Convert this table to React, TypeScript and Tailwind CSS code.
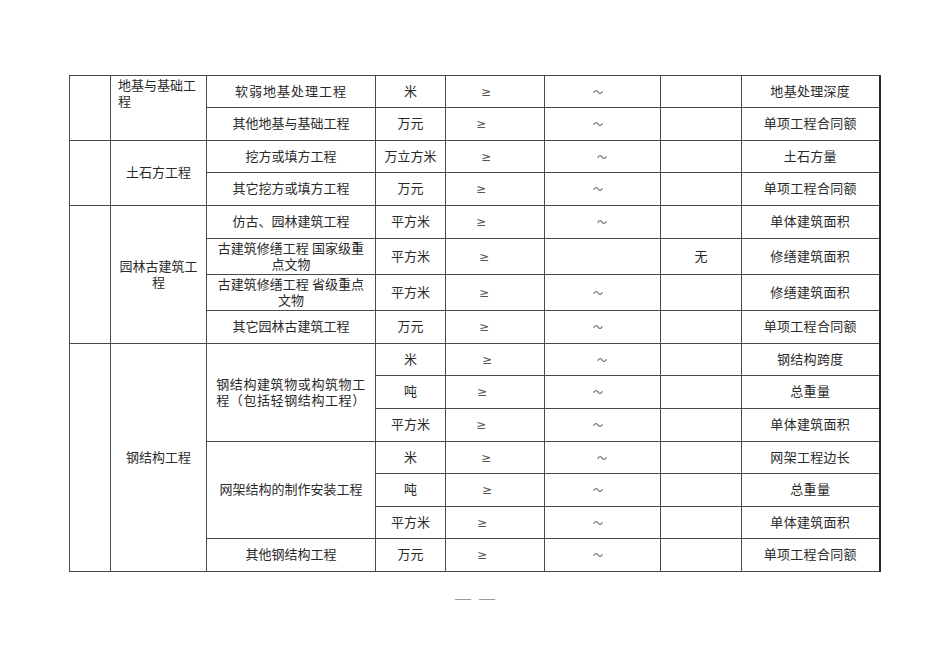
import React from "react";

type Row = {
  item: React.ReactNode;
  unit: string;
  gePad: number;
  tildePad: number | null;
  extra?: string;
  basis: string;
  h: number;
  itemSpan?: number;
  noItem?: boolean;
};

const FONT = "font-['Liberation_Serif','Noto_Sans_CJK_SC',serif]";
const cell = "border border-[#4a4a4a] p-0 align-middle text-center";

// 每组的行；gePad / tildePad 是符号在单元格中的左侧偏移
const groups: { name: React.ReactNode; nameTop?: boolean; rows: Row[] }[] = [
  {
    name: "地基与基础工程",
    nameTop: true,
    rows: [
      { item: <span className="tracking-[1px]">软弱地基处理工程</span>, unit: "米", gePad: 36, tildePad: 48, basis: "地基处理深度", h: 32 },
      { item: "其他地基与基础工程", unit: "万元", gePad: 31, tildePad: 48, basis: "单项工程合同额", h: 33 },
    ],
  },
  {
    name: "土石方工程",
    rows: [
      { item: "挖方或填方工程", unit: "万立方米", gePad: 36, tildePad: 52, basis: "土石方量", h: 32 },
      { item: "其它挖方或填方工程", unit: "万元", gePad: 31, tildePad: 48, basis: "单项工程合同额", h: 33 },
    ],
  },
  {
    name: "园林古建筑工程",
    rows: [
      { item: "仿古、园林建筑工程", unit: "平方米", gePad: 31, tildePad: 52, basis: "单体建筑面积", h: 33 },
      {
        item: (
          <>
            古建筑修缮工程 国家级重
            <br />
            点文物
          </>
        ),
        unit: "平方米",
        gePad: 34,
        tildePad: null,
        extra: "无",
        basis: "修缮建筑面积",
        h: 36,
      },
      {
        item: (
          <>
            古建筑修缮工程 省级重点
            <br />
            文物
          </>
        ),
        unit: "平方米",
        gePad: 34,
        tildePad: 48,
        basis: "修缮建筑面积",
        h: 36,
      },
      { item: "其它园林古建筑工程", unit: "万元", gePad: 34, tildePad: 48, basis: "单项工程合同额", h: 33 },
    ],
  },
  {
    name: "钢结构工程",
    rows: [
      {
        item: (
          <span className="tracking-[0.6px]">
            钢结构建筑物或构筑物工
            <br />
            程（包括轻钢结构工程）
          </span>
        ),
        itemSpan: 3,
        unit: "米",
        gePad: 37,
        tildePad: 52,
        basis: "钢结构跨度",
        h: 32,
      },
      { item: null, noItem: true, unit: "吨", gePad: 32, tildePad: 48, basis: "总重量", h: 33 },
      { item: null, noItem: true, unit: "平方米", gePad: 31, tildePad: 48, basis: "单体建筑面积", h: 33 },
      { item: "网架结构的制作安装工程", itemSpan: 3, unit: "米", gePad: 36, tildePad: 52, basis: "网架工程边长", h: 32 },
      { item: null, noItem: true, unit: "吨", gePad: 37, tildePad: 48, basis: "总重量", h: 33 },
      { item: null, noItem: true, unit: "平方米", gePad: 32, tildePad: 48, basis: "单体建筑面积", h: 32 },
      { item: "其他钢结构工程", unit: "万元", gePad: 32, tildePad: 48, basis: "单项工程合同额", h: 33 },
    ],
  },
];

export default function App() {
  return (
    <div className={`h-[672px] w-[950px] bg-white text-[#2a2a2a] ${FONT}`}>
      <div className="pl-[69px] pt-[75px]">
        <table className="table-fixed border-collapse w-[810px] text-[13px] leading-[16px]">
          <colgroup>
            <col className="w-[41px]" />
            <col className="w-[96px]" />
            <col className="w-[169px]" />
            <col className="w-[70px]" />
            <col className="w-[99px]" />
            <col className="w-[116px]" />
            <col className="w-[81px]" />
            <col className="w-[138px]" />
          </colgroup>
          <tbody>
            {groups.map((g, gi) =>
              g.rows.map((r, ri) => (
                <tr key={`${gi}-${ri}`} style={{ height: r.h }}>
                  {ri === 0 && (
                    <>
                      <td className={cell} rowSpan={g.rows.length} />
                      <td
                        className={
                          g.nameTop
                            ? "border border-[#4a4a4a] p-0 pl-[7px] pt-[2px] align-top text-left"
                            : `${cell} px-[8px]`
                        }
                        rowSpan={g.rows.length}
                      >
                        {g.name}
                      </td>
                    </>
                  )}
                  {!r.noItem && (
                    <td className={`${cell} px-[4px]`} rowSpan={r.itemSpan ?? 1}>
                      {r.item}
                    </td>
                  )}
                  <td className={cell}>{r.unit}</td>
                  <td className={`${cell} text-left`}>
                    <span
                      className="font-['DejaVu_Sans',sans-serif] text-[12px] text-[#555]"
                      style={{ paddingLeft: r.gePad - 1 }}
                    >
                      ≥
                    </span>
                  </td>
                  <td className={`${cell} text-left`}>
                    {r.tildePad !== null && (
                      <span
                        className="font-['Noto_Sans_CJK_SC',sans-serif] text-[10px] text-[#555]"
                        style={{ paddingLeft: r.tildePad }}
                      >
                        ～
                      </span>
                    )}
                  </td>
                  <td className={cell}>{r.extra ?? ""}</td>
                  <td className={`${cell} border-r-2 border-r-[#2a2a2a] tracking-[0.3px]`}>{r.basis}</td>
                </tr>
              ))
            )}
          </tbody>
        </table>
        <div className="mt-[18px] flex justify-center gap-[8px] pr-[69px] text-[16px] leading-[16px] text-[#9a9a9a]">
          <span>—</span>
          <span>—</span>
        </div>
      </div>
    </div>
  );
}
